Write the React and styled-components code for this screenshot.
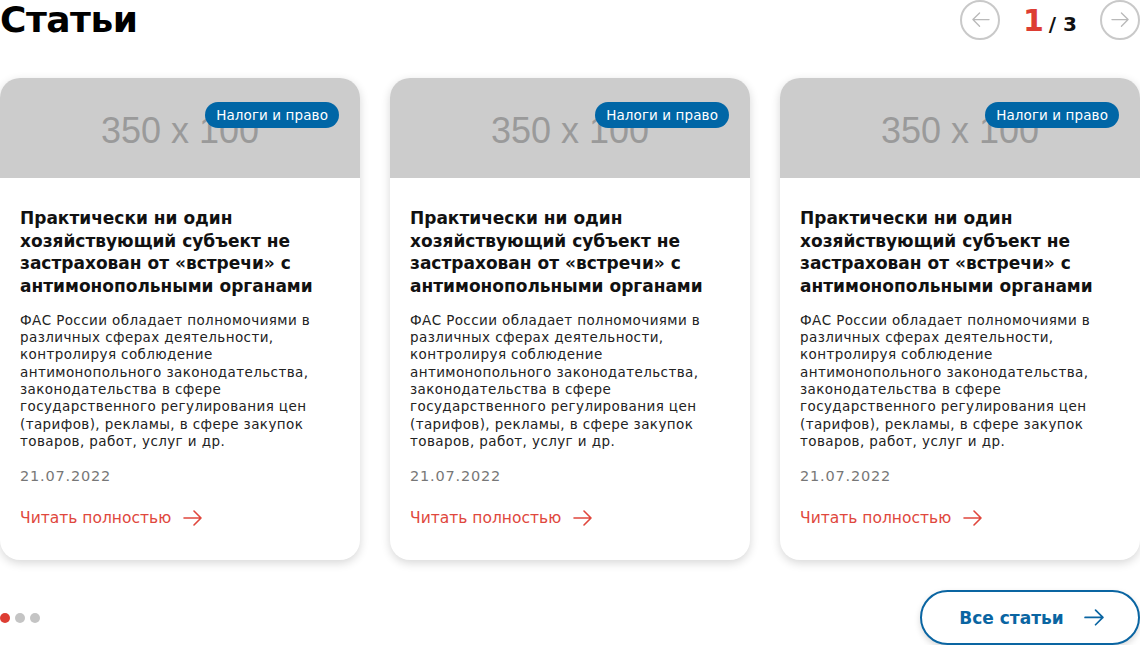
import React from 'react'
import styled, { createGlobalStyle } from 'styled-components'

const GlobalStyle = createGlobalStyle`
  body {
    margin: 0;
    background: #fff;
    font-family: "DejaVu Sans", "Noto Sans", sans-serif;
    color: #111;
  }
`

const articles = [1, 2, 3].map((id) => ({
  id,
  tag: 'Налоги и право',
  title: 'Практически ни один хозяйствующий субъект не застрахован от «встречи» с антимонопольными органами',
  text: 'ФАС России обладает полномочиями в различных сферах деятельности, контролируя соблюдение антимонопольного законодательства, законодательства в сфере государственного регулирования цен (тарифов), рекламы, в сфере закупок товаров, работ, услуг и др.',
  date: '21.07.2022',
}))

const Arrow = ({ color = 'currentColor', width = 20, dir = 'right', stroke = 1.6 }) => (
  <svg width={width} height={width * 0.8} viewBox="0 0 20 16" fill="none"
    style={{ transform: dir === 'left' ? 'scaleX(-1)' : 'none' }}>
    <path d="M1 8h17M11 1l7 7-7 7" stroke={color} strokeWidth={stroke} strokeLinecap="round" strokeLinejoin="round" />
  </svg>
)

const Articles = () => {
  return (
    <Page>
      <GlobalStyle />
      <Header>
        <Title>Статьи</Title>
        <Pager>
          <RoundButton><Arrow color="#b9b9b9" width={19} dir="left" stroke={1.4} /></RoundButton>
          <Counter><span>1</span>/ 3</Counter>
          <RoundButton><Arrow color="#b9b9b9" width={19} stroke={1.4} /></RoundButton>
        </Pager>
      </Header>

      <Cards>
        {articles.map((a) => (
          <Card key={a.id}>
            <Cover>
              350 x 100
              <Tag>{a.tag}</Tag>
            </Cover>
            <CardBody>
              <CardTitle>{a.title}</CardTitle>
              <CardText>{a.text}</CardText>
              <CardDate>{a.date}</CardDate>
              <ReadMore>Читать полностью <Arrow color="#e0473d" width={20} /></ReadMore>
            </CardBody>
          </Card>
        ))}
      </Cards>

      <Footer>
        <Dots>
          <Dot active />
          <Dot />
          <Dot />
        </Dots>
        <AllButton>Все статьи <Arrow color="#0a65a2" width={21} /></AllButton>
      </Footer>
    </Page>
  )
}

const Page = styled.div`
  width: 1140px;
  overflow: hidden;
`
const Header = styled.div`
  display: flex;
  justify-content: space-between;
  align-items: flex-start;
  height: 40px;
`
const Title = styled.h1`
  margin: 0;
  font-size: 36px;
  line-height: 40px;
  font-weight: 700;
  letter-spacing: -0.5px;
  color: #000;
`
const Pager = styled.div`
  display: flex;
  align-items: center;
  height: 40px;
`
const RoundButton = styled.div`
  box-sizing: border-box;
  width: 40px;
  height: 40px;
  border: 2px solid #c9c9c9;
  border-radius: 50%;
  display: flex;
  align-items: center;
  justify-content: center;
`
const Counter = styled.div`
  width: 100px;
  font-size: 20px;
  font-weight: 700;
  color: #111;
  display: flex;
  justify-content: center;
  align-items: baseline;
  gap: 5px;
  span {
    font-size: 30px;
    color: #dd3d33;
  }
`
const Cards = styled.div`
  display: grid;
  grid-template-columns: repeat(3, 360px);
  gap: 30px;
  margin-top: 38px;
`
const Card = styled.div`
  height: 482px;
  border-radius: 20px;
  overflow: hidden;
  background: #fff;
  box-shadow: 0 3px 10px rgba(0, 0, 0, 0.16);
  display: flex;
  flex-direction: column;
`
const Cover = styled.div`
  position: relative;
  height: 100px;
  background: #cccccc;
  display: flex;
  align-items: center;
  justify-content: center;
  font-family: "Liberation Sans", Arial, sans-serif;
  font-size: 36px;
  color: #9a9a9a;
  padding-top: 6px;
  box-sizing: border-box;
`
const Tag = styled.div`
  position: absolute;
  top: 24px;
  right: 21px;
  height: 26px;
  padding: 0 11px;
  border-radius: 13px;
  background: #0066a6;
  color: #fff;
  font-family: "DejaVu Sans", sans-serif;
  font-size: 13.5px;
  letter-spacing: 0.1px;
  line-height: 26px;
`
const CardBody = styled.div`
  padding: 29px 20px 0;
  display: flex;
  flex-direction: column;
`
const CardTitle = styled.h3`
  margin: 0;
  font-size: 17px;
  line-height: 22.7px;
  font-weight: 700;
  color: #111;
`
const CardText = styled.p`
  margin: 14px 0 0;
  font-size: 13.5px;
  letter-spacing: 0.4px;
  line-height: 17.3px;
  color: #222;
`
const CardDate = styled.div`
  margin-top: 18px;
  font-size: 14.5px;
  letter-spacing: 0.8px;
  color: #777;
`
const ReadMore = styled.a`
  margin-top: 25px;
  display: flex;
  align-items: center;
  gap: 12px;
  font-size: 15.5px;
  color: #e0473d;
  cursor: pointer;
`
const Footer = styled.div`
  display: flex;
  justify-content: space-between;
  align-items: center;
  margin-top: 30px;
`
const Dots = styled.div`
  display: flex;
  gap: 5px;
`
const Dot = styled.span`
  width: 10px;
  height: 10px;
  border-radius: 50%;
  background: ${(p) => (p.active ? '#dd3d33' : '#c4c4c4')};
`
const AllButton = styled.button`
  box-sizing: border-box;
  width: 220px;
  height: 55px;
  border: 2px solid #0a65a2;
  border-radius: 28px;
  background: #fff;
  box-shadow: 0 3px 6px rgba(0, 0, 0, 0.15);
  display: flex;
  align-items: center;
  justify-content: center;
  gap: 20px;
  font-family: "DejaVu Sans", sans-serif;
  font-size: 17px;
  font-weight: 700;
  color: #0a65a2;
  padding: 0 0 0 4px;
`

export default Articles
